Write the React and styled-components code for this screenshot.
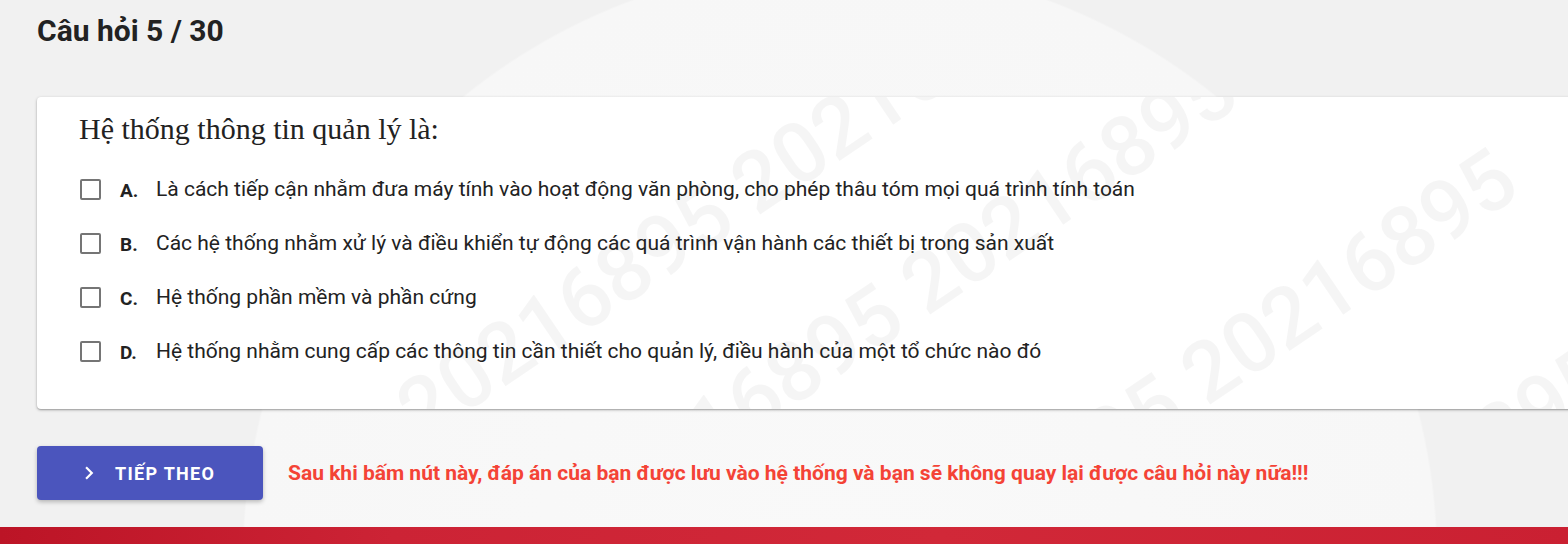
import React from 'react';
import styled, { createGlobalStyle } from 'styled-components';
import { MdChevronRight } from 'react-icons/md';

const GlobalStyle = createGlobalStyle`
  html, body {
    margin: 0;
    padding: 0;
    background: #f1f1f1;
    font-family: Roboto, "Noto Sans", Arial, sans-serif;
    color: #222;
    overflow: hidden;
  }
`

const Page = styled.div`
  min-height: 600px;
  overflow: hidden;
  background:
    radial-gradient(circle at 840px 560px, #f9f9f9 0, #f7f7f7 596px, #f1f1f1 598px);
`

const Content = styled.div`
  padding: 10px 0 27px 37px;
`

const Title = styled.h2`
  margin: 0;
  font-size: 30px;
  line-height: 42px;
  font-weight: 700;
  color: #222;
`

const Card = styled.div`
  position: relative;
  overflow: hidden;
  margin-top: 45px;
  margin-right: -40px;
  background: #fff;
  border-radius: 4px;
  box-shadow: 0 1px 3px rgba(0, 0, 0, 0.3), 0 1px 1px rgba(0, 0, 0, 0.12);
  padding: 15px 42px 31px;
`

const Watermark = styled.div`
  position: absolute;
  inset: 0;
  pointer-events: none;
  user-select: none;
`

const Mark = styled.span`
  position: absolute;
  white-space: pre;
  font-size: 84px;
  line-height: 84px;
  font-weight: 500;
  color: rgba(0, 0, 0, 0.04);
  transform: rotate(-34deg);
  transform-origin: 0 50%;
`

const Question = styled.div`
  position: relative;
  font-family: "Liberation Serif", "Times New Roman", serif;
  font-size: 30px;
  line-height: 34px;
  color: #222;
`

const Options = styled.div`
  position: relative;
  margin-top: 16px;
  display: flex;
  flex-direction: column;
`

const Option = styled.label`
  display: flex;
  align-items: center;
  height: 54px;
  cursor: pointer;
`

const Box = styled.span`
  width: 17px;
  height: 17px;
  margin-left: 1px;
  border: 2px solid #757575;
  border-radius: 2px;
  flex-shrink: 0;
`

const Letter = styled.span`
  margin-left: 19px;
  width: 36px;
  flex-shrink: 0;
  font-size: 19px;
  font-weight: 700;
  padding-top: 3px;
  color: #222;
`

const OptionText = styled.span`
  font-size: 21px;
  color: #222;
`

const Footer = styled.div`
  display: flex;
  align-items: center;
  gap: 25px;
  margin-top: 37px;
`

const NextButton = styled.button`
  display: flex;
  align-items: center;
  gap: 13px;
  width: 226px;
  height: 54px;
  padding: 0 0 0 39px;
  border: 0;
  border-radius: 4px;
  background: #4b55bd;
  color: #fff;
  font-family: Roboto, Arial, sans-serif;
  font-size: 18px;
  font-weight: 700;
  letter-spacing: 1.3px;
  text-transform: uppercase;
  box-shadow: 0 2px 4px rgba(0, 0, 0, 0.25);
  cursor: pointer;
`

const Warning = styled.div`
  font-size: 21px;
  font-weight: 700;
  color: #f44336;
`

const RedBar = styled.div`
  height: 60px;
  background: linear-gradient(90deg, #bc1426 0%, #cc2335 25%, #d12838 60%, #ca2032 100%);
`

const options = [
  { key: 'A', text: 'Là cách tiếp cận nhằm đưa máy tính vào hoạt động văn phòng, cho phép thâu tóm mọi quá trình tính toán' },
  { key: 'B', text: 'Các hệ thống nhằm xử lý và điều khiển tự động các quá trình vận hành các thiết bị trong sản xuất' },
  { key: 'C', text: 'Hệ thống phần mềm và phần cứng' },
  { key: 'D', text: 'Hệ thống nhằm cung cấp các thông tin cần thiết cho quản lý, điều hành của một tổ chức nào đó' },
]

// watermark rows (student id), positions in card coordinates
const marks = [
  { left: 370, top: 280 },
  { left: 540, top: 380 },
  { left: 820, top: 470 },
  { left: 1250, top: 440 },
]

const App = () => (
  <React.Fragment>
    <GlobalStyle />
    <Page>
      <Content>
        <Title>Câu hỏi 5 / 30</Title>
        <Card>
          <Watermark>
            {marks.map((m, i) => (
              <Mark key={i} style={{ left: m.left, top: m.top }}>20216895 20216895</Mark>
            ))}
          </Watermark>
          <Question>Hệ thống thông tin quản lý là:</Question>
          <Options>
            {options.map(o => (
              <Option key={o.key}>
                <Box />
                <Letter>{o.key}.</Letter>
                <OptionText>{o.text}</OptionText>
              </Option>
            ))}
          </Options>
        </Card>
        <Footer>
          <NextButton type="button">
            <MdChevronRight size={26} />
            Tiếp theo
          </NextButton>
          <Warning>Sau khi bấm nút này, đáp án của bạn được lưu vào hệ thống và bạn sẽ không quay lại được câu hỏi này nữa!!!</Warning>
        </Footer>
      </Content>
      <RedBar />
    </Page>
  </React.Fragment>
)

export default App;
